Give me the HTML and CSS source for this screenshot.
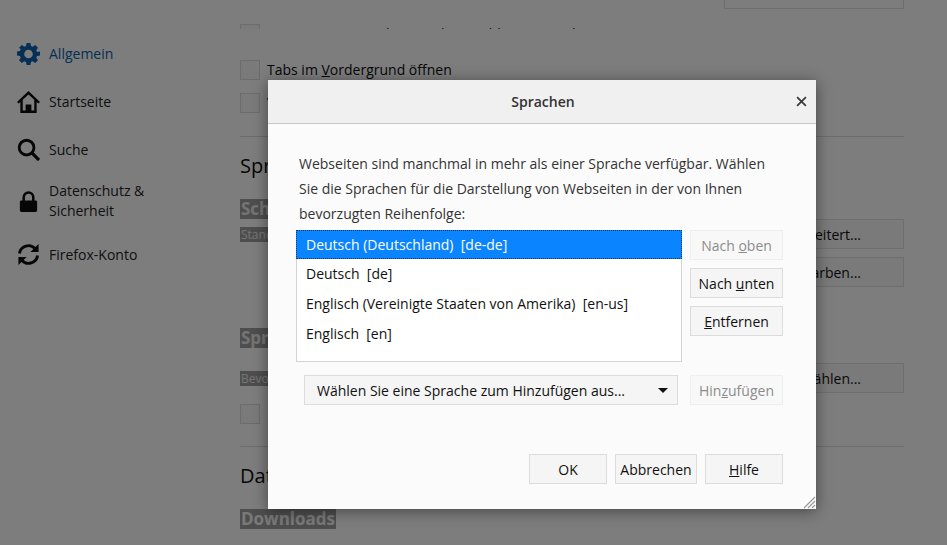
FILE: index.html
```html
<!DOCTYPE html>
<html lang="de">
<head>
    <meta charset="UTF-8">
    <title>Einstellungen</title>
    <link rel="stylesheet" href="styles.css">
</head>
<body>

    <!-- Page behind the dialog -->
    <div class="page">
        <nav class="sidebar">
            <a class="nav-item active">
                <svg class="nav-icon" viewBox="0 0 24 24"><path fill="#0a5ea8" fill-rule="evenodd" d="M10 1h4l.6 3.1 1.8.8L19 3.100l2.900 2.900-1.800 2.600.8 1.800L24 10v4l-3.100.6-.8 1.800 1.800 2.600-2.900 2.900-2.600-1.800-1.800.8L14 24h-4l-.6-3.100-1.800-.8L5 21.900 2.100 19l1.800-2.600-.8-1.800L0 14v-4l3.100-.6.8-1.800L2.100 6 5 3.100l2.600 1.800 1.800-.8zM12 8a4.500 4.500 0 1 0 0 9 4.500 4.500 0 0 0 0-9z"/></svg>
                <span>Allgemein</span>
            </a>
            <a class="nav-item">
                <svg class="nav-icon" viewBox="0 0 24 24"><path fill="#0c0c0c" fill-rule="evenodd" d="M12 1 0 12.500l1.700 1.700L3.500 12.600V24h17V12.600l1.800 1.600 1.700-1.700zM6 21.500V10.300l6-5.700 6 5.700v11.200h-3V15H9v6.500z"/></svg>
                <span>Startseite</span>
            </a>
            <a class="nav-item">
                <svg class="nav-icon" viewBox="0 0 24 24"><circle cx="10" cy="10" r="7.700" fill="none" stroke="#0c0c0c" stroke-width="3"/><path d="M15.500 15.500 23 23" stroke="#0c0c0c" stroke-width="3.400" fill="none"/></svg>
                <span>Suche</span>
            </a>
            <a class="nav-item two-line">
                <svg class="nav-icon" viewBox="0 0 24 24"><path fill="none" stroke="#0c0c0c" stroke-width="2.600" d="M7 12V7.500a5 5 0 0 1 10 0V12"/><rect x="3" y="11" width="18" height="12" rx="1.500" fill="#0c0c0c"/></svg>
                <span>Datenschutz &amp;<br>Sicherheit</span>
            </a>
            <a class="nav-item">
                <svg class="nav-icon" viewBox="0 0 24 24"><path fill="none" stroke="#0c0c0c" stroke-width="3" d="M2.500 11A9.500 9.500 0 0 1 19 6M21.500 13A9.500 9.500 0 0 1 5 18"/><path fill="#0c0c0c" d="M22.500 1v8.500H14zM1.500 23v-8.500H10z"/></svg>
                <span>Firefox-Konto</span>
            </a>
        </nav>

        <main class="content">
            <div class="top-button"></div>
            <div class="check-row cut"><span class="box"></span><span>Warnen, wenn mehrere Tabs geschlossen werden</span></div>
            <div class="check-row"><span class="box"></span><span>Tabs im <u>V</u>ordergrund öffnen</span></div>
            <div class="check-row"><span class="box"></span><span>Vorschau</span></div>
            <hr class="rule rule-one">

            <h2 class="section-title">Sprache und Erscheinungsbild</h2>
            <h3 class="sub-title">Schriftarten</h3>
            <div class="pref-row">
                <span class="mark-small">Standard</span>
                <button class="pref-button">Erweitert...</button>
            </div>
            <div class="pref-row">
                <span></span>
                <button class="pref-button">Farben...</button>
            </div>

            <h3 class="sub-title second">Sprache</h3>
            <div class="pref-row tight">
                <span class="mark-small">Bevorzugte</span>
                <button class="pref-button">Wählen...</button>
            </div>
            <div class="check-row lower"><span class="box"></span><span></span></div>
            <hr class="rule rule-two">

            <h2 class="section-title files">Dateien und Anwendungen</h2>
            <h3 class="sub-title downloads">Downloads</h3>
        </main>
    </div>

    <div class="shade"></div>

    <!-- Language dialog -->
    <section class="dialog">
        <header class="dialog-head">
            <h1>Sprachen</h1>
            <svg class="close" viewBox="0 0 10 10"><path d="M1 1l8 8M9 1l-8 8" stroke="#3a3a3a" stroke-width="1.600" fill="none"/></svg>
        </header>
        <div class="dialog-body">
            <p class="intro">Webseiten sind manchmal in mehr als einer Sprache verfügbar. Wählen Sie die Sprachen für die Darstellung von Webseiten in der von Ihnen bevorzugten Reihenfolge:</p>

            <div class="list-row">
                <ul class="lang-list">
                    <li class="selected">Deutsch (Deutschland) &nbsp;[de-de]</li>
                    <li>Deutsch &nbsp;[de]</li>
                    <li>Englisch (Vereinigte Staaten von Amerika) &nbsp;[en-us]</li>
                    <li>Englisch &nbsp;[en]</li>
                </ul>
                <div class="list-buttons">
                    <button class="btn" disabled>Nach <u>o</u>ben</button>
                    <button class="btn">Nach <u>u</u>nten</button>
                    <button class="btn"><u>E</u>ntfernen</button>
                </div>
            </div>

            <div class="add-row">
                <div class="select">
                    <span>Wählen Sie eine Sprache zum Hinzufügen aus...</span>
                    <i class="arrow"></i>
                </div>
                <button class="btn" disabled>Hin<u>z</u>ufügen</button>
            </div>

            <div class="dialog-foot">
                <button class="btn ok">OK</button>
                <button class="btn cancel">Abbrechen</button>
                <button class="btn help"><u>H</u>ilfe</button>
            </div>
        </div>
        <svg class="grip" viewBox="0 0 14 14"><path d="M13 2 2 13M13 6l-7 7M13 10l-3 3" stroke="#9a9a9a" stroke-width="1.200" fill="none"/></svg>
    </section>

</body>
</html>
```

FILE: styles.css
```css
/* General Reset */
* {
    margin: 0;
    padding: 0;
    box-sizing: border-box;
}

html, body {
    height: 545px;
    overflow: hidden;
}

body {
    font-family: 'Open Sans', sans-serif;
    font-size: 14px;
    color: #0c0c0c;
    background-color: #fbfbfb;
    position: relative;
}

/* Page behind the dialog */
.page {
    display: flex;
    height: 545px;
    overflow: hidden;
}

.sidebar {
    width: 240px;
    flex-shrink: 0;
    padding: 29px 0 0 17px;
}

.nav-item {
    display: flex;
    align-items: center;
    gap: 9px;
    height: 48px;
    color: #222;
}

.nav-item.two-line {
    height: 56px;
    line-height: 20px;
    margin-bottom: 1px;
}

.nav-item.active {
    color: #0a5ea8;
}

.nav-icon {
    width: 23px;
    height: 23px;
    flex-shrink: 0;
}

.content {
    width: 664px;
}

.top-button {
    width: 180px;
    height: 9px;
    margin-left: 484px;
    border: 1px solid #ddd;
    border-top: 0;
}

.check-row {
    display: flex;
    align-items: center;
    gap: 7px;
    height: 33px;
}

.check-row.cut {
    height: 20px;
    margin-top: 0;
    padding-top: 15px;
    overflow: hidden;
    align-items: flex-start;
}

.check-row.cut + .check-row {
    margin-top: 24px;
}

.box {
    width: 20px;
    height: 20px;
    background-color: #f4f4f4;
    border: 1px solid #d8d8d8;
    flex-shrink: 0;
}

.rule {
    border: 0;
    border-top: 1px solid #d8d8d8;
}

.rule-one {
    margin-top: 17px;
}

.section-title {
    font-size: 20px;
    font-weight: 400;
    line-height: 28px;
    margin-top: 15px;
}

.sub-title {
    display: table;
    font-size: 17px;
    font-weight: 700;
    line-height: 20px;
    padding: 0 1px;
    color: #e8e8e8;
    background-color: #9d9d9d;
    margin-top: 19px;
}

.sub-title.second {
    margin-top: 41px;
}

.sub-title.downloads {
    margin-top: 19px;
    color: #f2f2f2;
}

.pref-row {
    display: flex;
    justify-content: space-between;
    align-items: center;
    height: 30px;
    margin-bottom: 8px;
}

.pref-row:first-of-type {
    margin-top: 10px;
}

.pref-row.tight {
    margin-top: 15px;
    margin-bottom: 4px;
}

.mark-small {
    font-size: 12px;
    line-height: 15px;
    color: #e8e8e8;
    background-color: #9d9d9d;
    padding: 0 1px;
}

.pref-button {
    width: 214px;
    height: 30px;
    font: inherit;
    text-align: right;
    padding-right: 42px;
    color: #111;
    background-color: #f4f4f4;
    border: 1px solid #dcdcdc;
}

.check-row.lower {
    margin-top: 0;
}

.rule-two {
    margin-top: 16px;
}

.section-title.files {
    margin-top: 15px;
}

/* Grey layer over the page */
.shade {
    position: absolute;
    inset: 0;
    background-color: rgba(0, 0, 0, 0.5);
}

/* Dialog */
.dialog {
    position: absolute;
    left: 268px;
    top: 80px;
    width: 548px;
    height: 429px;
    background-color: #fbfbfb;
    box-shadow: 0 2px 14px rgba(0, 0, 0, 0.45);
}

.dialog-head {
    position: relative;
    height: 44px;
    background-color: #f0f0f0;
    border-bottom: 1px solid #c8c8c8;
    display: flex;
    align-items: center;
    justify-content: center;
}

.dialog-head h1 {
    font-size: 14px;
    font-weight: 600;
    color: #333;
    margin-right: -2px;
}

.close {
    position: absolute;
    right: 9px;
    top: 16px;
    width: 11px;
    height: 11px;
}

.dialog-body {
    padding: 27px 33px 0 28px;
}

.intro {
    width: 490px;
    padding-left: 3px;
    line-height: 25px;
    color: #333;
    height: 75px;
}

.list-row {
    display: flex;
    gap: 8px;
    margin-top: 4px;
}

.lang-list {
    list-style: none;
    width: 386px;
    height: 132px;
    background-color: #fff;
    border: 1px solid #d4d4d4;
    border-top: 0;
}

.lang-list li {
    height: 30px;
    line-height: 30px;
    padding-left: 9px;
    color: #111;
}

.lang-list li.selected {
    height: 29px;
    margin: 0 -1px 0;
    padding-left: 10px;
    color: #fff;
    background-color: #0a84ff;
    outline: 1px dotted #123a78;
    outline-offset: -1px;
}

.list-buttons {
    display: flex;
    flex-direction: column;
    gap: 8px;
}

.btn {
    width: 93px;
    height: 30px;
    font: inherit;
    color: #111;
    background-color: #f5f5f5;
    border: 1px solid #dcdcdc;
}

.btn[disabled] {
    color: #8c8c8c;
    background-color: #f8f8f8;
    border-color: #eeeeee;
}

.add-row {
    display: flex;
    justify-content: space-between;
    align-items: center;
    margin-top: 13px;
    padding-left: 8px;
}

.select {
    display: flex;
    align-items: center;
    justify-content: space-between;
    width: 374px;
    height: 30px;
    padding: 0 9px 0 12px;
    background-color: #f5f5f5;
    border: 1px solid #dcdcdc;
    color: #111;
}

.arrow {
    width: 0;
    height: 0;
    border-left: 5px solid transparent;
    border-right: 5px solid transparent;
    border-top: 5px solid #111;
}

.dialog-foot {
    display: flex;
    justify-content: flex-end;
    gap: 8px;
    margin-top: 49px;
}

.btn.ok {
    width: 78px;
}

.btn.cancel {
    width: 82px;
}

.btn.help {
    width: 78px;
}

.grip {
    position: absolute;
    right: 0;
    bottom: 0;
    width: 14px;
    height: 14px;
}
```
